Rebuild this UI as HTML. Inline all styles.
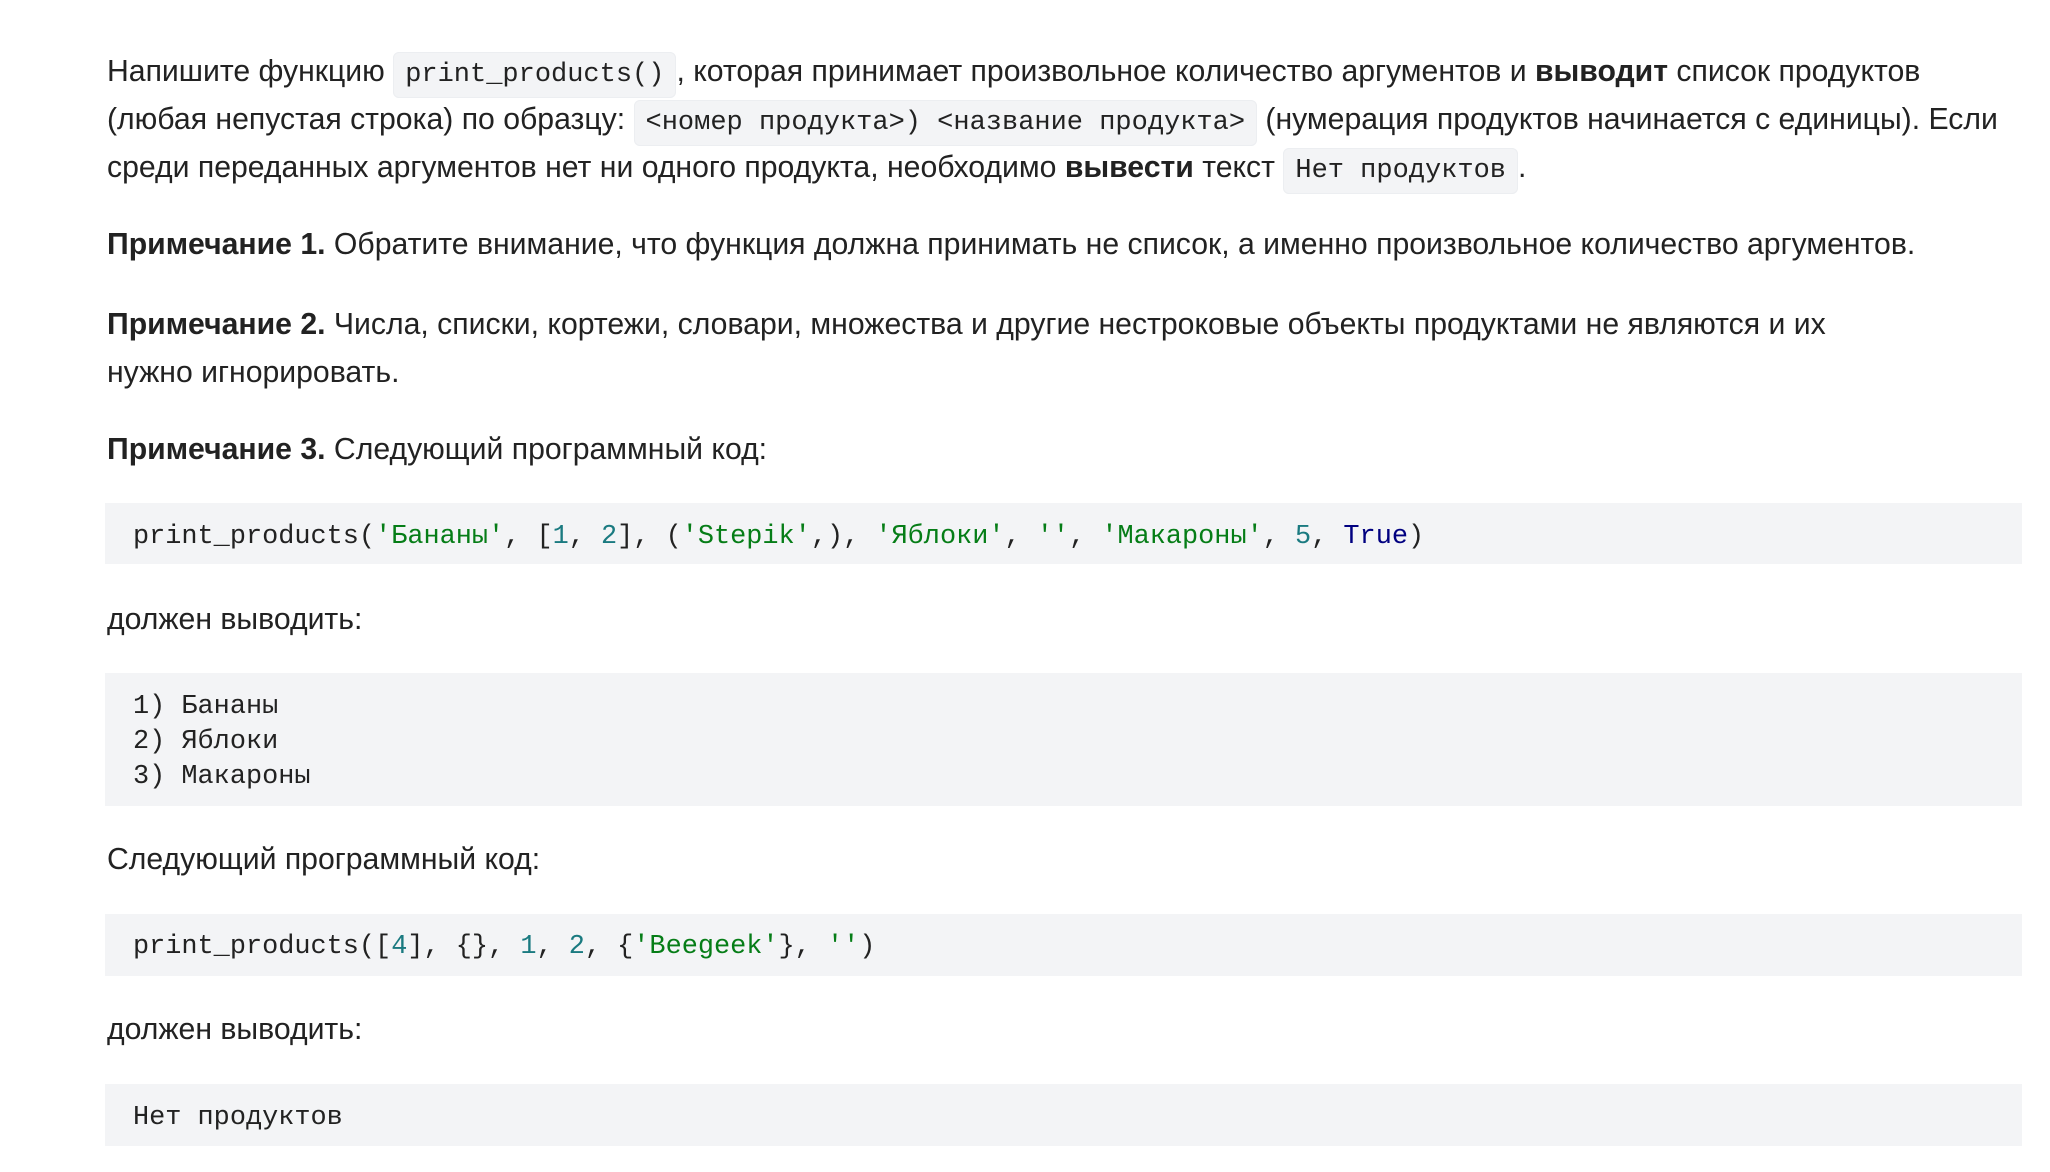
<!DOCTYPE html>
<html><head><meta charset="utf-8"><style>
body{margin:0;width:2050px;height:1172px;background:#fff;position:relative;overflow:hidden;font-family:"Liberation Sans","DejaVu Sans",sans-serif;color:#222;}
.l{position:absolute;left:107px;font-size:30.2px;line-height:48px;white-space:nowrap;}
b{font-weight:bold;}
code{font-family:"Liberation Mono","DejaVu Sans Mono",monospace;font-size:27px;background:#f3f4f6;border-radius:6px;padding:7px 11px;border:1px solid #eceef1;}
.blk{position:absolute;left:105px;width:1917px;background:#f3f4f6;}
.blk pre{margin:0;position:absolute;left:28px;font-family:"Liberation Mono","DejaVu Sans Mono",monospace;font-size:26.9px;line-height:35px;color:#222;}
.s{color:#067d17}.n{color:#1a7a80}.k{color:#000080}
</style></head><body>
<div class="l" style="top:48px">Напишите функцию <code>print_products()</code>, которая принимает произвольное количество аргументов и <b>выводит</b> список продуктов</div>
<div class="l" style="top:96px">(любая непустая строка) по образцу: <code>&lt;номер продукта&gt;) &lt;название продукта&gt;</code> (нумерация продуктов начинается с единицы). Если</div>
<div class="l" style="top:144px">среди переданных аргументов нет ни одного продукта, необходимо <b>вывести</b> текст <code>Нет продуктов</code>.</div>
<div class="l" style="top:221px"><b>Примечание 1.</b> Обратите внимание, что функция должна принимать не список, а именно произвольное количество аргументов.</div>
<div class="l" style="top:301px"><b>Примечание 2.</b> Числа, списки, кортежи, словари, множества и другие нестроковые объекты продуктами не являются и их</div>
<div class="l" style="top:349px">нужно игнорировать.</div>
<div class="l" style="top:426px"><b>Примечание 3.</b> Следующий программный код:</div>
<div class="blk" style="top:503px;height:61px"><pre style="top:17px">print_products(<span class="s">'Бананы'</span>, [<span class="n">1</span>, <span class="n">2</span>], (<span class="s">'Stepik'</span>,), <span class="s">'Яблоки'</span>, <span class="s">''</span>, <span class="s">'Макароны'</span>, <span class="n">5</span>, <span class="k">True</span>)</pre></div>
<div class="l" style="top:596px">должен выводить:</div>
<div class="blk" style="top:673px;height:133px"><pre style="top:17px">1) Бананы
2) Яблоки
3) Макароны</pre></div>
<div class="l" style="top:836px">Следующий программный код:</div>
<div class="blk" style="top:914px;height:62px"><pre style="top:16px">print_products([<span class="n">4</span>], {}, <span class="n">1</span>, <span class="n">2</span>, {<span class="s">'Beegeek'</span>}, <span class="s">''</span>)</pre></div>
<div class="l" style="top:1006px">должен выводить:</div>
<div class="blk" style="top:1084px;height:62px"><pre style="top:17px">Нет продуктов</pre></div>
</body></html>
